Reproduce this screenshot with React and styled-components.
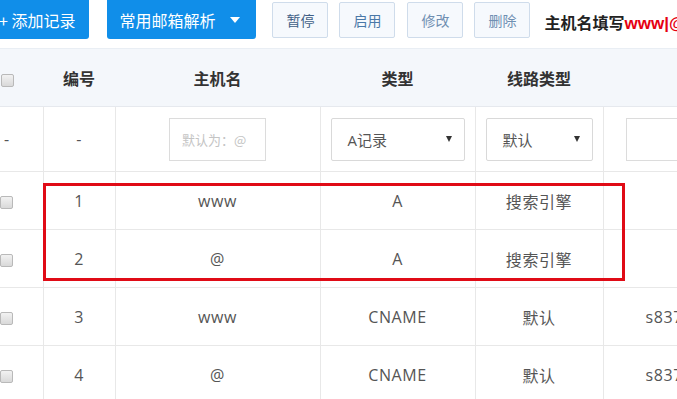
import React from "react";
import styled, { createGlobalStyle } from "styled-components";

const GlobalStyle = createGlobalStyle`
  html, body {
    margin: 0;
    padding: 0;
    background: #fff;
    overflow: hidden;
  }
  body {
    font-family: "Noto Sans CJK SC", "Microsoft YaHei", sans-serif;
  }
`;

const Page = styled.div`
  margin-left: -29px;
  width: 1000px;
`;

const Toolbar = styled.div`
  display: flex;
  align-items: flex-start;
  height: 48px;
  padding-left: 14px;
  white-space: nowrap;
`;

const PrimaryButton = styled.button`
  display: flex;
  align-items: center;
  height: 42px;
  margin: -3px ${(p) => p.$gap || 0}px 0 0;
  padding: 3px ${(p) => p.$padRight || 14}px 0 ${(p) => p.$padLeft || 14}px;
  border: none;
  border-radius: 3px;
  background: #108ee9;
  color: #fff;
  font-family: "Noto Sans CJK SC", sans-serif;
  font-size: 16px;
  line-height: 1;
`;

const Caret = styled.span`
  display: inline-block;
  margin-left: 15px;
  width: 0;
  height: 0;
  border-left: 5px solid transparent;
  border-right: 5px solid transparent;
  border-top: 6px solid #fff;
`;

const LightButton = styled.button`
  height: 36px;
  margin: 2px ${(p) => p.$gap}px 0 0;
  padding: 0 13px;
  border: 1px solid #cfdceb;
  border-radius: 2px;
  background: #f6f9fd;
  color: ${(p) => p.$color || "#4a78a8"};
  font-family: "Noto Sans CJK SC", sans-serif;
  font-size: 14px;
`;

const Hint = styled.div`
  margin-top: 10px;
  font-size: 16px;
  font-weight: 700;
  color: #222;
`;

const Red = styled.span`
  color: #e60012;
  font-family: "Liberation Sans", sans-serif;
  font-size: 17px;
  font-weight: 700;
`;

const TableWrap = styled.div`
  position: relative;
`;

const Table = styled.table`
  border-collapse: collapse;
  table-layout: fixed;
  width: 932px;
  font-family: "Open Sans", "Noto Sans CJK SC", sans-serif;
  font-size: 16px;
  letter-spacing: 0.6px;
  color: #555;
`;

const Th = styled.th`
  height: 57px;
  padding: 0;
  background: #f4f7fb;
  border-top: 1px solid #e9eef4;
  border-bottom: 1px solid #e6e9ee;
  color: #333;
  font-family: "Noto Sans CJK SC", sans-serif;
  font-weight: 700;
  font-size: 16px;
  letter-spacing: 0;
  text-align: center;
`;

const Td = styled.td`
  height: ${(p) => p.$h || 57}px;
  padding: 0 ${(p) => p.$pad || 0}px;
  border: 1px solid #e8e8e8;
  border-top: none;
  text-align: ${(p) => p.$align || "center"};
  white-space: nowrap;
  overflow: hidden;
  &:first-child {
    border-left: none;
  }
  &:last-child {
    border-right: none;
  }
`;

const Check = styled.span`
  display: inline-block;
  width: 11px;
  height: 11px;
  vertical-align: middle;
  border: 1px solid #b9b9b9;
  border-radius: 2px;
  background: linear-gradient(#f2f2f2, #d9d9d9);
`;

const TextInput = styled.div`
  box-sizing: border-box;
  width: ${(p) => p.$w}px;
  height: 43px;
  margin: ${(p) => (p.$center ? "0 auto" : "0")};
  padding-left: 12px;
  border: 1px solid #dcdcdc;
  display: flex;
  align-items: center;
  color: #c4c4c4;
  font-family: "Noto Sans CJK SC", sans-serif;
  font-size: 13px;
  letter-spacing: 0;
`;

const Select = styled.div`
  box-sizing: border-box;
  display: flex;
  align-items: center;
  justify-content: space-between;
  height: 43px;
  padding: 0 12px 0 16px;
  border: 1px solid #d9d9d9;
  border-radius: 2px;
  color: #555;
  font-size: 15px;
  letter-spacing: 0;
`;

const SmallCaret = styled.span`
  width: 0;
  height: 0;
  border-left: 3px solid transparent;
  border-right: 3px solid transparent;
  border-top: 6px solid #333;
`;

const Marker = styled.div`
  position: absolute;
  left: 72px;
  top: 135px;
  width: 582px;
  height: 98px;
  box-sizing: border-box;
  border: 3px solid #e00b16;
  pointer-events: none;
`;

const rows = [
  { id: 1, host: "www", type: "A", line: "搜索引擎", value: "" },
  { id: 2, host: "@", type: "A", line: "搜索引擎", value: "" },
  { id: 3, host: "www", type: "CNAME", line: "默认", value: "s837" },
  { id: 4, host: "@", type: "CNAME", line: "默认", value: "s837" },
];

export default function App() {
  return (
    <>
      <GlobalStyle />
      <Page>
        <Toolbar>
          <PrimaryButton $gap={18}>+ 添加记录</PrimaryButton>
          <PrimaryButton $gap={16} $padLeft={12} $padRight={16}>
            常用邮箱解析
            <Caret />
          </PrimaryButton>
          <LightButton $gap={11} $color="#3f5f86">暂停</LightButton>
          <LightButton $gap={12}>启用</LightButton>
          <LightButton $gap={11} $color="#6f8fb2">修改</LightButton>
          <LightButton $gap={14} $color="#6f8fb2">删除</LightButton>
          <Hint>
            主机名填写<Red>www|@</Red>
          </Hint>
        </Toolbar>

        <TableWrap>
          <Table>
            <colgroup>
              <col style={{ width: 72 }} />
              <col style={{ width: 72 }} />
              <col style={{ width: 205 }} />
              <col style={{ width: 155 }} />
              <col style={{ width: 128 }} />
              <col style={{ width: 300 }} />
            </colgroup>
            <thead>
              <tr>
                <Th>
                  <Check />
                </Th>
                <Th>编号</Th>
                <Th>主机名</Th>
                <Th>类型</Th>
                <Th>线路类型</Th>
                <Th />
              </tr>
            </thead>
            <tbody>
              <tr>
                <Td $h={64}>-</Td>
                <Td $h={64}>-</Td>
                <Td $h={64}>
                  <TextInput $w={97} $center>
                    默认为：@
                  </TextInput>
                </Td>
                <Td $h={64} $pad={10}>
                  <Select>
                    A记录
                    <SmallCaret />
                  </Select>
                </Td>
                <Td $h={64} $pad={10}>
                  <Select>
                    默认
                    <SmallCaret />
                  </Select>
                </Td>
                <Td $h={64} $align="left" $pad={22}>
                  <TextInput $w={240} />
                </Td>
              </tr>
              {rows.map((r) => (
                <tr key={r.id}>
                  <Td>
                    <Check />
                  </Td>
                  <Td>{r.id}</Td>
                  <Td>{r.host}</Td>
                  <Td>{r.type}</Td>
                  <Td>{r.line}</Td>
                  <Td $align="left" $pad={42}>
                    {r.value}
                  </Td>
                </tr>
              ))}
            </tbody>
          </Table>
          <Marker />
        </TableWrap>
      </Page>
    </>
  );
}
